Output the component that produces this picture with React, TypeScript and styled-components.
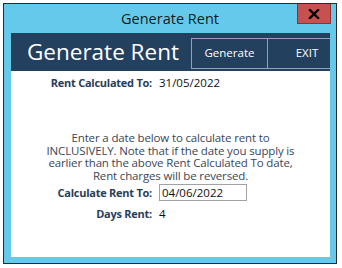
import React, { useState } from 'react'
import styled, { createGlobalStyle } from 'styled-components'

const GlobalStyle = createGlobalStyle`
  html, body {
    margin: 0;
    padding: 0;
    background: #ffffff;
    overflow: hidden;
  }
  * { box-sizing: border-box; }
`

const FONT = `"Open Sans", "Noto Sans", "DejaVu Sans", sans-serif`

const Desktop = styled.div`
  position: relative;
  width: 342px;
  height: 268px;
  background: #ffffff;
`

const Window = styled.div`
  position: absolute;
  left: 3px;
  top: 3px;
  width: 334px;
  height: 261px;
  border: 1px solid #2a2a2a;
  background: #64c9eb;
  display: flex;
  flex-direction: column;
  font-family: ${FONT};
`

const TitleBar = styled.div`
  position: relative;
  height: 29px;
  display: flex;
  align-items: center;
  justify-content: center;
  color: #1a1a1a;
  font-size: 14.5px;
  padding-bottom: 1px;
`

const CloseButton = styled.button`
  position: absolute;
  top: 0;
  right: 5px;
  width: 34px;
  height: 20px;
  background: #c75050;
  border: 1px solid #8a3434;
  border-top: none;
  display: flex;
  align-items: center;
  justify-content: center;
  padding: 0;
  cursor: pointer;
`

const Frame = styled.div`
  flex: 1;
  display: flex;
  flex-direction: column;
  padding: 0 6px 6px 7px;
`

const Header = styled.div`
  height: 38px;
  background: #23405f;
  display: flex;
  align-items: center;
  overflow: hidden;
`

const HeaderTitle = styled.div`
  flex: none;
  color: #ffffff;
  font-size: 22.5px;
  padding-left: 16px;
  width: 180px;
  white-space: nowrap;
  margin-bottom: 2px;
`

const HeaderButton = styled.button<{ $width: number }>`
  flex: none;
  width: ${(p) => p.$width}px;
  height: 31px;
  margin-top: 2px;
  background: transparent;
  border: 1px solid #8ea3bb;
  margin-right: -1px;
  color: #ffffff;
  font-family: ${FONT};
  font-size: 11.5px;
  cursor: pointer;
  padding: 0 0 2px 0;
`

const Content = styled.div`
  flex: 1;
  background: #ffffff;
  padding-top: 3px;
`

const FieldRow = styled.div<{ $gap?: number }>`
  display: grid;
  grid-template-columns: 141px 1fr;
  column-gap: 7px;
  align-items: center;
  margin-top: ${(p) => p.$gap ?? 0}px;
  height: 17px;
`

const Label = styled.div`
  text-align: right;
  font-weight: 700;
  font-size: 11px;
  color: #283e58;
  white-space: nowrap;
  letter-spacing: -0.25px;
`

const Value = styled.div`
  font-size: 11.5px;
  color: #111111;
`

const Note = styled.p`
  margin: 41px 0 0 0;
  text-align: center;
  font-size: 11.5px;
  line-height: 12.6px;
  letter-spacing: -0.15px;
  color: #3a4658;
  padding: 0 6px;
`

const NoteLine = styled.span`
  display: block;
  height: 12.6px;
  white-space: nowrap;
`

const DateInput = styled.input`
  width: 88px;
  height: 17px;
  border: 1px solid #a2a2a2;
  font-family: ${FONT};
  font-size: 11.5px;
  color: #111111;
  padding: 0 2px;
  outline: none;
`

function CloseGlyph() {
  return (
    <svg width="12" height="10" viewBox="0 0 12 10">
      <path d="M2 1 L10 9 M10 1 L2 9" stroke="#000" strokeWidth="2.4" strokeLinecap="square" />
    </svg>
  )
}

const noteLines = [
  'Enter a date below to calculate rent to',
  'INCLUSIVELY. Note that if the date you supply is',
  'earlier than the above Rent Calculated To date,',
  'Rent charges will be reversed.',
]

export default function App() {
  const [rentTo, setRentTo] = useState('04/06/2022')

  return (
    <Desktop>
      <GlobalStyle />
      <Window>
        <TitleBar>
          Generate Rent
          <CloseButton aria-label="Close">
            <CloseGlyph />
          </CloseButton>
        </TitleBar>
        <Frame>
          <Header>
            <HeaderTitle>Generate Rent</HeaderTitle>
            <HeaderButton $width={77}>Generate</HeaderButton>
            <HeaderButton $width={80}>EXIT</HeaderButton>
          </Header>
          <Content>
            <FieldRow>
              <Label>Rent Calculated To:</Label>
              <Value>31/05/2022</Value>
            </FieldRow>
            <Note>
              {noteLines.map((line) => (
                <NoteLine key={line}>{line}</NoteLine>
              ))}
            </Note>
            <FieldRow $gap={2}>
              <Label>Calculate Rent To:</Label>
              <DateInput value={rentTo} onChange={(e) => setRentTo(e.target.value)} />
            </FieldRow>
            <FieldRow $gap={4}>
              <Label>Days Rent:</Label>
              <Value>4</Value>
            </FieldRow>
          </Content>
        </Frame>
      </Window>
    </Desktop>
  )
}
